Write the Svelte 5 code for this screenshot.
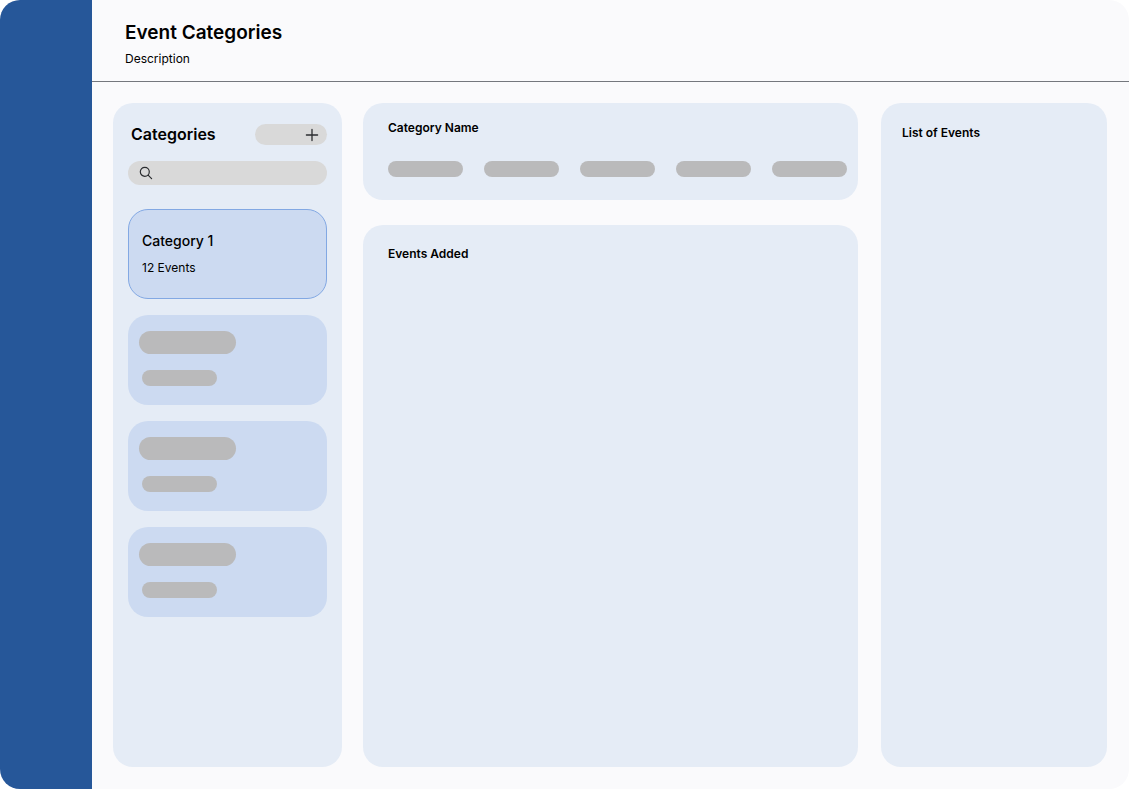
<script>
  const placeholders = [1, 2, 3];
  const fields = [1, 2, 3, 4, 5];
  let query = $state('');
</script>

<div class="app">
  <nav class="rail" aria-label="Main"></nav>

  <div class="page">
    <header class="top">
      <h1>Event Categories</h1>
      <p>Description</p>
    </header>

    <main class="content">
      <section class="panel categories">
        <div class="bar">
          <h2>Categories</h2>
          <button class="add" aria-label="Add category">
            <svg width="14" height="14" viewBox="0 0 14 14" fill="none" stroke="#2b2d30" stroke-width="1.3" stroke-linecap="round" aria-hidden="true">
              <path d="M7 1.4v11.2M1.4 7h11.2" />
            </svg>
          </button>
        </div>

        <label class="search">
          <svg width="14" height="14" viewBox="0 0 14 14" fill="none" stroke="#2b2d30" stroke-width="1.2" stroke-linecap="round" stroke-linejoin="round" aria-hidden="true">
            <circle cx="5.8" cy="5.8" r="4.5" />
            <path d="M9.1 9.1l3.5 3.5" />
          </svg>
          <input type="search" aria-label="Search categories" bind:value={query} />
        </label>

        <div class="cards">
          <button class="card selected">
            <span class="name">Category 1</span>
            <span class="count">12 Events</span>
          </button>
          {#each placeholders as id (id)}
            <div class="card empty">
              <span class="pill large"></span>
              <span class="pill"></span>
            </div>
          {/each}
        </div>
      </section>

      <div class="middle">
        <section class="panel details">
          <h3>Category Name</h3>
          <div class="fields">
            {#each fields as id (id)}
              <span class="pill"></span>
            {/each}
          </div>
        </section>
        <section class="panel added">
          <h3>Events Added</h3>
        </section>
      </div>

      <section class="panel events">
        <h3>List of Events</h3>
      </section>
    </main>
  </div>
</div>

<style>
  :global(body) {
    margin: 0;
    background: #fff;
  }

  .app,
  .app * {
    box-sizing: border-box;
  }

  .app {
    display: flex;
    min-height: 100vh;
    border-radius: 20px;
    overflow: hidden;
    background: #fafafc;
    color: #000;
    font-family: Inter, "Liberation Sans", sans-serif;
  }

  h1,
  h2,
  h3,
  p {
    margin: 0;
  }

  .rail {
    flex: 0 0 92px;
    background: #265799;
  }

  .page {
    flex: 1;
    min-width: 0;
    display: flex;
    flex-direction: column;
  }

  .top {
    padding: 21px 33px 14px;
    border-bottom: 1px solid #74777d;
  }

  h1 {
    font-size: 19px;
    line-height: 24px;
    font-weight: 600;
  }

  .top p {
    margin-top: 6px;
    font-size: 12px;
    line-height: 16px;
  }

  .content {
    flex: 1;
    display: flex;
    padding: 21px 22px 22px 21px;
  }

  .panel {
    border-radius: 20px;
    background: #e5ecf6;
  }

  .categories {
    flex: 0 0 229px;
    min-width: 0;
    padding: 21px 15px;
  }

  .bar {
    display: flex;
    align-items: center;
    justify-content: space-between;
    padding-left: 3px;
  }

  h2 {
    font-size: 16px;
    line-height: 21px;
    font-weight: 600;
  }

  button {
    font: inherit;
    color: inherit;
    border: 0;
  }

  .add {
    display: flex;
    align-items: center;
    justify-content: flex-end;
    width: 72px;
    height: 21px;
    padding: 0 8px;
    border-radius: 12px;
    background: #d9d9d9;
  }

  .search {
    display: flex;
    align-items: center;
    gap: 8px;
    height: 24px;
    margin-top: 16px;
    padding: 0 11px;
    border-radius: 12px;
    background: #d9d9d9;
  }

  .search input {
    flex: 1;
    width: 100%;
    min-width: 0;
    padding: 0;
    border: 0;
    outline: 0;
    background: transparent;
    font: inherit;
    font-size: 12px;
  }

  .cards {
    display: flex;
    flex-direction: column;
    gap: 16px;
    margin-top: 24px;
  }

  .card {
    display: flex;
    flex-direction: column;
    align-items: flex-start;
    height: 90px;
    border-radius: 20px;
    background: #ccdaf1;
  }

  .selected {
    gap: 10px;
    padding: 22px 13px;
    border: 1px solid #82a8e3;
    text-align: left;
  }

  .name {
    font-size: 14px;
    line-height: 18px;
    font-weight: 500;
  }

  .count {
    font-size: 12px;
    line-height: 16px;
  }

  .empty {
    gap: 16px;
    padding: 16px 14px;
  }

  .pill {
    width: 75px;
    height: 16px;
    border-radius: 12px;
    background: #bababb;
  }

  .large {
    width: 97px;
    height: 23px;
    margin-left: -3px;
  }

  .middle {
    flex: 1;
    min-width: 0;
    display: flex;
    flex-direction: column;
    gap: 25px;
    margin: 0 23px 0 21px;
  }

  h3 {
    font-size: 12px;
    line-height: 16px;
    font-weight: 600;
  }

  .details {
    padding: 17px 11px 23px 25px;
  }

  .fields {
    display: flex;
    justify-content: space-between;
    margin-top: 25px;
  }

  .added {
    flex: 1;
    padding: 21px 25px;
  }

  .events {
    flex: 0 0 226px;
    padding: 22px 21px;
  }
</style>
